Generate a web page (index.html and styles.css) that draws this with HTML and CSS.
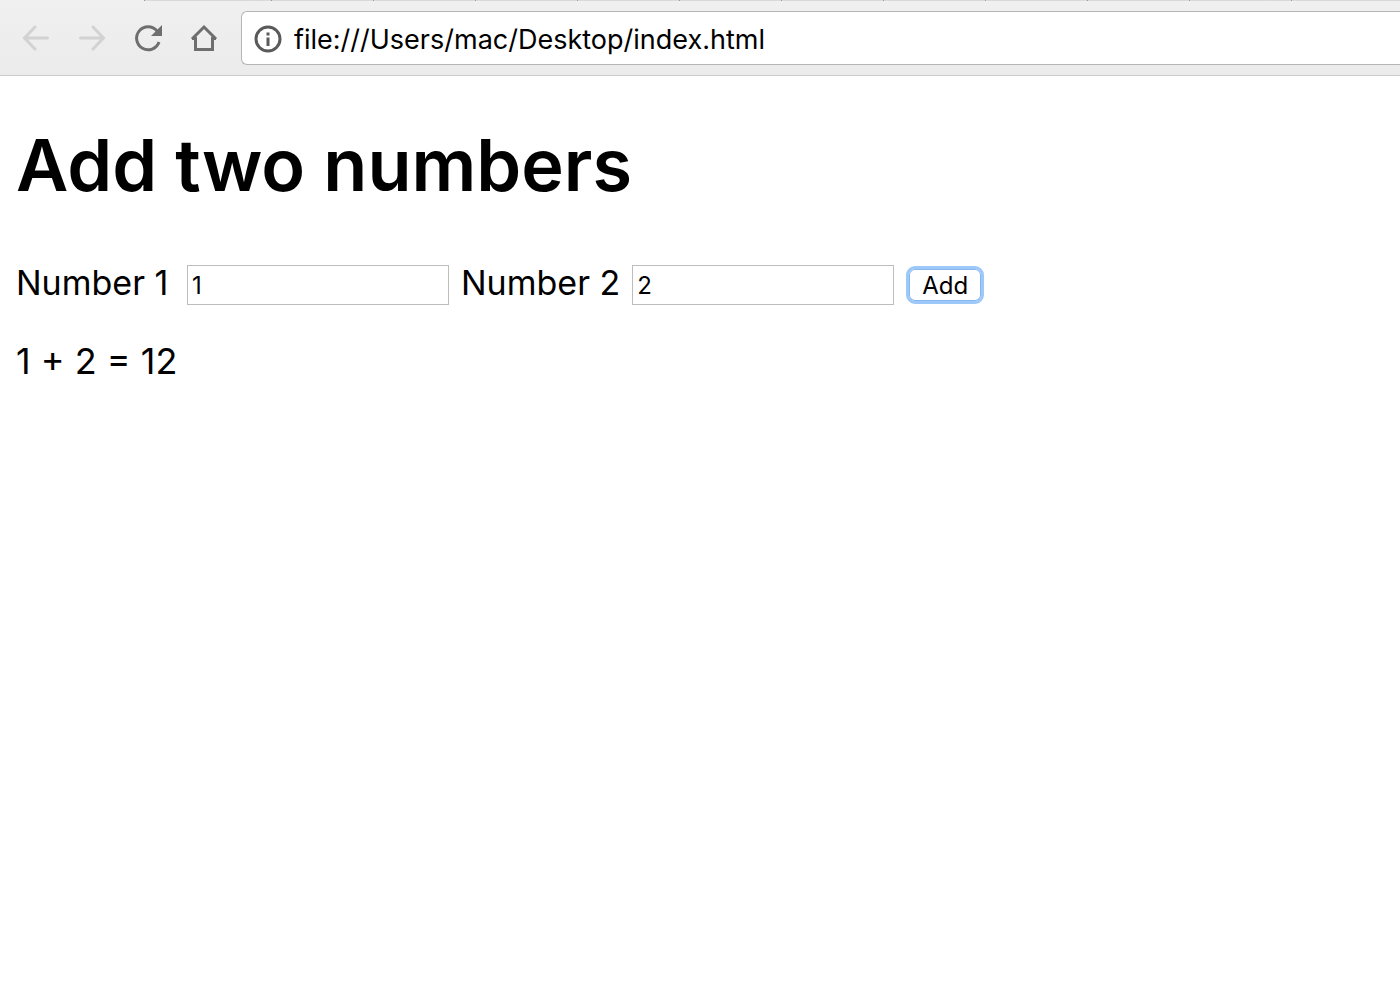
FILE: index.html
```html
<!DOCTYPE html>
<html lang="en">
<head>
  <meta charset="UTF-8" />
  <meta name="viewport" content="width=device-width, initial-scale=1.0"/>
  <title>Add two numbers</title>
  <link rel="stylesheet" href="styles.css">
</head>
<body>
  <header class="browser">
    <div class="tabs">
      <span class="tab active"></span>
      <span class="tab first"></span>
      <span class="tab"></span>
      <span class="tab"></span>
      <span class="tab"></span>
      <span class="tab"></span>
      <span class="tab"></span>
      <span class="tab"></span>
      <span class="tab"></span>
      <span class="tab"></span>
      <span class="tab"></span>
      <span class="tab"></span>
      <span class="tab rest"></span>
    </div>
    <div class="toolbar">
      <div class="nav">
        <button type="button" class="nav-btn" aria-label="Back" disabled>
          <svg viewBox="0 0 32 32"><path d="M27.500 16H5M15 5L4.500 16 15 27" stroke-linecap="round"/></svg>
        </button>
        <button type="button" class="nav-btn" aria-label="Forward" disabled>
          <svg viewBox="0 0 32 32"><path d="M4.500 16H27M17 5l10.500 11L17 27" stroke-linecap="round"/></svg>
        </button>
        <button type="button" class="nav-btn" aria-label="Reload">
          <svg viewBox="0 0 32 32"><path d="M25 9A11.500 11.500 0 1 0 27 20"/><path class="solid" d="M30 3v11H19z"/></svg>
        </button>
        <button type="button" class="nav-btn" aria-label="Home">
          <svg viewBox="0 0 32 32"><path d="M4 17L16 5l12 12M7.500 15v12.500h17V15M4 16.500h4M24 16.500h4"/></svg>
        </button>
      </div>
      <div class="address">
        <svg class="info" viewBox="0 0 28 28"><circle cx="14" cy="14" r="12"/><path d="M14 12.500V21M14 7.500v3"/></svg>
        <input type="text" class="url" aria-label="Address" value="file:///Users/mac/Desktop/index.html" />
      </div>
    </div>
  </header>

  <main class="page">
    <h1>Add two numbers</h1>

    <div class="form-row">
      <label for="num1">Number 1</label>
      <input type="text" class="number" id="num1" value="1" />
      <label for="num2">Number 2</label>
      <input type="text" class="number" id="num2" value="2" />
      <button type="button" class="add-btn" onclick="addNumbers()">Add</button>
    </div>

    <p class="result" id="result">1 + 2 = 12</p>
  </main>

  <script>
    function addNumbers() {
      const a = document.getElementById("num1").value;
      const b = document.getElementById("num2").value;
      document.getElementById("result").textContent = `${a} + ${b} = ${a + b}`;
    }
  </script>
</body>
</html>
```
FILE: styles.css
```css
* {
  box-sizing: border-box;
}

body {
  margin: 0;
  background-color: white;
  color: black;
  font-family: Inter, sans-serif;
  font-size: 34px;
}

.browser {
  background: linear-gradient(#f0f0f0, #ebebeb);
  border-bottom: 1px solid #cccccc;
}

.tabs {
  display: flex;
  height: 1px;
  overflow: hidden;
}

.tab {
  flex: none;
  width: 102px;
  background: #d9d9d9;
  border-right: 1px solid #999;
}

.tab.active {
  width: 145px;
  background: #f0f0f0;
}

.tab.first {
  width: 127px;
}

.tab.rest {
  flex: 1;
  border: none;
}

.toolbar {
  display: flex;
  align-items: center;
  gap: 21px;
  padding: 10px 0 10px 20px;
}

.nav {
  display: flex;
  gap: 24px;
}

.nav-btn {
  flex: none;
  width: 32px;
  height: 32px;
  padding: 0;
  border: none;
  background: none;
}

.nav-btn svg {
  display: block;
  fill: none;
  stroke: #6e6e6e;
  stroke-width: 3;
}

.nav-btn:disabled svg {
  stroke: #d2d2d2;
}

.nav-btn .solid {
  fill: #6e6e6e;
  stroke: none;
}

.address {
  flex: 1;
  display: flex;
  align-items: center;
  gap: 12px;
  height: 54px;
  padding: 2px 0 0 12px;
  background: white;
  border: 1px solid #b5b5b5;
  border-right: none;
  border-radius: 6px 0 0 6px;
}

.info {
  flex: none;
  width: 28px;
  height: 28px;
  fill: none;
  stroke: #5a5a5a;
  stroke-width: 3;
}

.url {
  flex: 1;
  min-width: 0;
  padding: 0;
  border: none;
  outline: none;
  background: none;
  font-family: Inter, sans-serif;
  font-size: 27px;
}

.page {
  padding: 38px 16px;
}

h1 {
  margin: 0;
  font-size: 72px;
  font-weight: 600;
  line-height: 102px;
}

.form-row {
  display: flex;
  flex-wrap: wrap;
  align-items: flex-start;
  gap: 12px;
  margin-top: 49px;
}

label,
.result {
  line-height: 36px;
}

label {
  min-width: 159px;
}

.number {
  width: 262px;
  height: 40px;
  padding: 0 4px;
  border: 1px solid #bdbdbd;
  font-family: Inter, sans-serif;
  font-size: 24px;
}

.add-btn {
  align-self: center;
  height: 38px;
  padding: 0 13px;
  background: white;
  border: 3px solid #9dc8fa;
  border-radius: 9px;
  box-shadow: inset 0 0 0 1px #86b6ee;
  font-family: Inter, sans-serif;
  font-size: 24px;
}

.result {
  margin: 38px 0 0;
  font-size: 36px;
}
```
